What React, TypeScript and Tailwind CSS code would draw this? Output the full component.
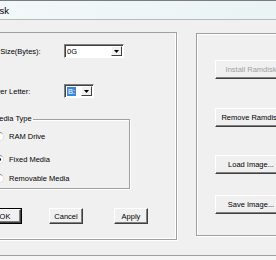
const btn =
  "flex items-center justify-center bg-[#f0f0f0] border border-t-white border-l-white border-r-[#404040] border-b-[#404040] shadow-[inset_-1px_-1px_0_#808080] whitespace-nowrap";

const Arrow = () => (
  <svg width="5" height="3" viewBox="0 0 5 3">
    <polygon points="0,0 5,0 2.5,3" fill="#000" />
  </svg>
);

const Combo = ({ width, children }: { width: string; children: React.ReactNode }) => (
  <div
    className={`${width} h-[14px] flex items-center bg-white border border-t-[#808080] border-l-[#808080] border-r-white border-b-white shadow-[inset_1px_1px_0_#404040] pl-[2px] pr-[1px] py-[1px]`}
  >
    <div className="flex-1 flex items-center">{children}</div>
    <div className="w-[11px] h-[10px] flex items-center justify-center bg-[#f0f0f0] border border-t-white border-l-white border-r-[#404040] border-b-[#404040]">
      <Arrow />
    </div>
  </div>
);

const Radio = ({ label, checked }: { label: string; checked?: boolean }) => (
  <div className="flex items-center gap-[5px] h-[10px]">
    <div className="w-[9px] h-[9px] rounded-full bg-white border border-t-[#808080] border-l-[#808080] border-r-[#e0e0e0] border-b-[#e0e0e0] flex items-center justify-center">
      {checked && <div className="w-[3px] h-[3px] rounded-full bg-black" />}
    </div>
    <span>{label}</span>
  </div>
);

export default function App() {
  return (
    <div
      className="w-[276px] h-[260px] overflow-hidden bg-[#f0f0f0] flex flex-col text-[7.5px] leading-[9px] text-black"
      style={{ fontFamily: '"Liberation Sans", Arial, sans-serif' }}
    >
      {/* title bar */}
      <div className="h-[20px] shrink-0 flex items-center bg-gradient-to-r from-[#f3f8f9] to-[#eaf4f5] border-t border-t-[#7c7c7c] border-b border-b-[#b9b9b9]">
        <span className="-ml-[28px] text-[9.5px] whitespace-nowrap">Ramdisk</span>
      </div>

      <div className="flex items-start mt-[12px]">
        {/* left page */}
        <div className="w-[198px] h-[208px] -ml-[21px] shrink-0 pl-[11px] border-t border-r border-b border-[#a0a0a0] shadow-[1px_1px_0_#fff,inset_-1px_-1px_0_#fff] flex flex-col">
          <div className="flex items-center mt-[11px]">
            <span className="w-[74px] shrink-0 whitespace-nowrap -ml-[21px] pr-[21px] box-content">
              Ramdisk Size(Bytes):
            </span>
            <Combo width="w-[60px]">
              <span>0G</span>
            </Combo>
          </div>

          <div className="flex items-center mt-[26px]">
            <span className="w-[74px] shrink-0 whitespace-nowrap -ml-[3px] pr-[3px] box-content">
              Driver Letter:
            </span>
            <Combo width="w-[30px]">
              <span className="bg-[#3b86d6] text-white px-[1px]">B:</span>
            </Combo>
          </div>

          <fieldset className="w-[140px] h-[75px] mt-[16px] border border-[#a0a0a0] shadow-[1px_1px_0_#fff,inset_1px_1px_0_#fff] pl-[4px]">
            <legend className="-ml-[3px] px-[1px] leading-[10px]">Media Type</legend>
            <div className="flex flex-col mt-[7px]">
              <Radio label="RAM Drive" />
              <div className="mt-[13px]">
                <Radio label="Fixed Media" checked />
              </div>
              <div className="mt-[9px]">
                <Radio label="Removable Media" />
              </div>
            </div>
          </fieldset>

          <div className="flex mt-[19px] -ml-[2px]">
            <div className="w-[34px] h-[16px] border border-black flex">
              <div className={`${btn} flex-1`}>OK</div>
            </div>
            <div className={`${btn} w-[34px] h-[16px] ml-[27px]`}>Cancel</div>
            <div className={`${btn} w-[34px] h-[16px] ml-[31px]`}>Apply</div>
          </div>
        </div>

        {/* right group */}
        <div className="w-[100px] h-[203px] mt-[1px] ml-[19px] shrink-0 pl-[18px] border border-[#a0a0a0] shadow-[1px_1px_0_#fff,inset_1px_1px_0_#fff] flex flex-col">
          <div className={`${btn} w-[72px] h-[19px] mt-[26px] text-[#a0a0a0]`}>Install Ramdisk</div>
          <div className={`${btn} w-[72px] h-[19px] mt-[29px]`}>Remove Ramdisk</div>
          <div className={`${btn} w-[72px] h-[19px] mt-[28px]`}>Load Image...</div>
          <div className={`${btn} w-[72px] h-[19px] mt-[21px]`}>Save Image...</div>
        </div>
      </div>

      <div className="flex-1 mt-[15px] border-t border-[#a0a0a0] bg-[#f6f6f6]" />
    </div>
  );
}
